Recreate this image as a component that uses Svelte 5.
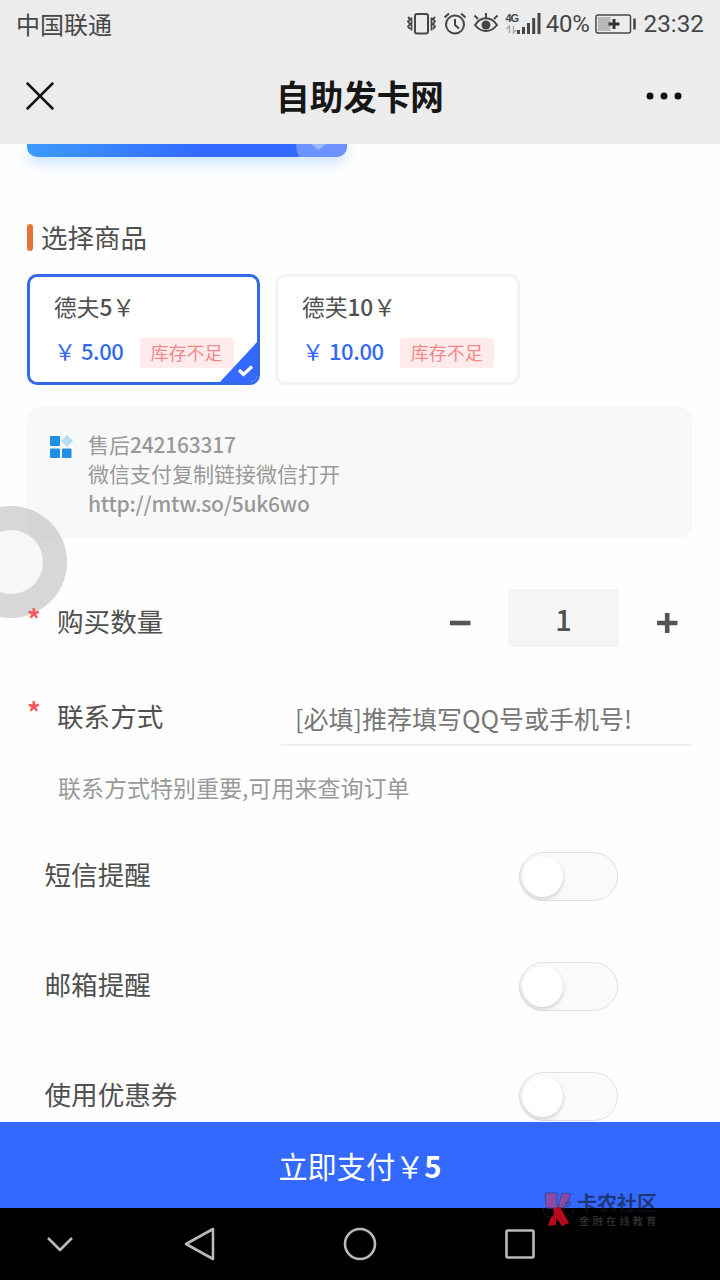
<script>
  const products = [
    { id: 1, name: '德夫', amount: '5', price: '5.00' },
    { id: 2, name: '德芙', amount: '10', price: '10.00' },
  ];

  let selected = $state(1);
  let quantity = $state(1);
  let contact = $state('');

  let options = $state([
    { label: '短信提醒', on: false },
    { label: '邮箱提醒', on: false },
    { label: '使用优惠券', on: false },
  ]);

  const total = $derived(Number(products.find((p) => p.id === selected).price) * quantity);
</script>

<div class="phone">
  <header>
    <div class="status">
      <span class="carrier">中国联通</span>
      <div class="indicators">
        <!-- vibrate, alarm, eye comfort, signal -->
        <svg width="136" height="28" viewBox="0 0 136 28" fill="none" stroke="#464646">
          <rect x="8" y="4" width="13" height="19.5" rx="2" stroke-width="2" />
          <path d="M1 7l2 2-2 2.500 2 2.500-2 2.500 2 2.500M4.500 7.500v13M28 7l-2 2 2 2.500-2 2.500 2 2.500-2 2.500M24.500 7.500v13" stroke-width="1.800" />
          <circle cx="48" cy="14.500" r="9" stroke-width="2" />
          <path d="M48 9v6l4 3.500M37.500 7.500l4.500-4M58.500 7.500l-4.500-4" stroke-width="2" />
          <path d="M68 15c6-9 16-9 22 0-6 8-16 8-22 0z" stroke-width="2" />
          <circle cx="79" cy="15" r="4.500" fill="#464646" stroke="none" />
          <path d="M79 8V3M71 9l-3.500-3.500M87 9l3.500-3.500" stroke-width="2" />
          <text x="98.500" y="12" class="net">4G</text>
          <path d="M102.500 23v-7l-3 3M106.500 16v7l3-3" stroke="#aaa" stroke-width="1.500" />
          <path d="M111.500 20v4M116.500 17v7M121.500 13v11M126.700 8v16M132 3v21" stroke-width="3" />
        </svg>
        <span class="percent">40%</span>
        <svg width="42" height="22" viewBox="0 0 42 22">
          <rect x="1" y="2" width="34.500" height="18" rx="2" fill="none" stroke="#464646" stroke-width="1.500" />
          <rect x="3" y="4" width="12.500" height="14" fill="#b7b7b7" />
          <path d="M13.500 11h11M19 6v10" stroke="#333" stroke-width="3" />
          <path d="M39.500 5.500v11" stroke="#464646" stroke-width="2.500" />
        </svg>
        <span class="time">23:32</span>
      </div>
    </div>
    <div class="titlebar">
      <svg width="28" height="28" viewBox="0 0 28 28" fill="none" stroke="#161616" stroke-width="2.500" stroke-linecap="round">
        <path d="M1.500 1.500l25 25M26.500 1.500l-25 25" />
      </svg>
      <h1>自助发卡网</h1>
      <svg width="38" height="10" viewBox="0 0 38 10" fill="#111">
        <circle cx="5" cy="5" r="3.500" /><circle cx="19" cy="5" r="3.500" /><circle cx="33" cy="5" r="3.500" />
      </svg>
    </div>
  </header>

  <main>
    <div class="category">
      <svg width="51" height="13" viewBox="0 0 51 13">
        <path d="M0 0h51v13H3Q0 7 0 0z" fill="#fff" opacity=".28" />
        <path d="M15 0h15l-8 6z" fill="#fff" opacity=".35" />
      </svg>
    </div>

    <h2><i></i>选择商品</h2>

    <div class="products">
      {#each products as p (p.id)}
        <button class="product" class:active={p.id === selected} onclick={() => (selected = p.id)}>
          <span class="name">{p.name}<b>{p.amount}</b>￥</span>
          <span class="row">
            <span class="price">￥ <b>{p.price}</b></span>
            <span class="stock">库存不足</span>
          </span>
          {#if p.id === selected}
            <svg class="tick" width="39" height="42" viewBox="0 0 39 42">
              <path d="M39 0v42H0z" fill="#3369ff" />
              <path d="M20 29l4.500 4.500 8.500-8" fill="none" stroke="#fff" stroke-width="3.200" />
            </svg>
          {/if}
        </button>
      {/each}
    </div>

    <section class="notice">
      <svg width="23" height="24" viewBox="0 0 23 24" fill="#2090e4">
        <rect x="0" y="1" width="10" height="10" rx="1" />
        <rect x="0" y="13.500" width="10" height="9.500" rx="1" />
        <rect x="12" y="13.500" width="9.500" height="9.500" rx="1" />
        <path d="M17 0l6 6-6 6-6-6z" fill="#b4dcf8" />
      </svg>
      <div>
        <p>售后<b>242163317</b></p>
        <p>微信支付复制链接微信打开</p>
        <p><b>http://mtw.so/5uk6wo</b></p>
      </div>
    </section>

    <div class="field quantity">
      <span class="star">*</span>
      <span class="label">购买数量</span>
      <div class="stepper">
        <button aria-label="减少" onclick={() => (quantity = Math.max(1, quantity - 1))}>
          <svg width="22" height="22" viewBox="0 0 22 22"><path d="M1 11h20.500" stroke="#555" stroke-width="4.600" /></svg>
        </button>
        <span class="count">{quantity}</span>
        <button aria-label="增加" onclick={() => quantity++}>
          <svg width="22" height="22" viewBox="0 0 22 22"><path d="M1 11h20.500M11.200 1v20" stroke="#555" stroke-width="4.600" /></svg>
        </button>
      </div>
    </div>

    <div class="field contact">
      <span class="star">*</span>
      <span class="label">联系方式</span>
      <input type="text" placeholder="[必填]推荐填写QQ号或手机号!" bind:value={contact} />
    </div>
    <p class="hint">联系方式特别重要,可用来查询订单</p>

    {#each options as opt}
      <div class="option">
        <span class="label">{opt.label}</span>
        <button class="switch" class:on={opt.on} aria-label={opt.label} onclick={() => (opt.on = !opt.on)}><i></i></button>
      </div>
    {/each}
  </main>

  <button class="pay">立即支付￥<b>{total}</b></button>

  <nav>
    <svg width="28" height="34" viewBox="0 0 28 34"><path d="M2 11l12 12 12-12" /></svg>
    <svg width="32" height="34" viewBox="0 0 32 34"><path d="M29 2v30L2 17z" /></svg>
    <svg width="34" height="34" viewBox="0 0 34 34"><circle cx="17" cy="17" r="15" /></svg>
    <svg width="32" height="34" viewBox="0 0 32 34"><rect x="2.500" y="3.500" width="27" height="27" rx="1" /></svg>
  </nav>

  <div class="assist"></div>

  <div class="watermark">
    <svg width="32" height="34" viewBox="0 0 32 34">
      <path d="M3 1h12v15H4z" fill="#8c4aa6" stroke="#334a9e" />
      <path d="M20 1l9 1-6 14-7-1z" fill="#8c4aa6" stroke="#334a9e" />
      <path d="M23 11l6-1-3 5z" fill="none" stroke="#27458f" />
      <path d="M11 16l7-1 9 16-7 3-6-8v7l-8 1 2-7 4-5z" fill="#b50b1c" />
      <path d="M1 16q0 9 7 9M24 24q7 0 8-8" fill="none" stroke="#171722" />
    </svg>
    <div>
      <strong>卡农社区</strong>
      <small>金融在线教育</small>
    </div>
  </div>
</div>

<style>
  :global(body) { background: #fff; }

  .phone {
    position: relative;
    display: flex;
    flex-direction: column;
    width: 720px;
    height: 1280px;
    overflow: hidden;
    background: #fefefe;
    color: #505050;
    font-family: "Noto Sans CJK SC", sans-serif;
  }
  .phone * { box-sizing: border-box; }
  h1, h2, p { margin: 0; font-weight: 400; }
  b { font-weight: 500; }
  svg { display: block; flex-shrink: 0; }
  button { padding: 0; border: 0; background: none; color: inherit; font-family: inherit; }

  /* top bars */
  header { height: 144px; flex-shrink: 0; background: #ececec; color: #464646; }
  .status { display: flex; justify-content: space-between; align-items: center; height: 48px; padding: 0 16px; }
  .carrier { font-size: 24px; line-height: 48px; }
  .indicators { display: flex; align-items: center; }
  .net { font: bold 11px "Liberation Sans", sans-serif; fill: #464646; stroke: none; letter-spacing: -1px; }
  .percent, .time { font-family: Roboto, sans-serif; font-size: 24.300px; line-height: 48px; }
  .percent { margin: 0 6px 0 3px; font-size: 24px; letter-spacing: -.3px; }
  .time { margin-left: 6px; }
  .titlebar { display: grid; grid-template-columns: 1fr auto 1fr; align-items: center; height: 96px; padding: 0 37px 0 26px; }
  .titlebar h1 { margin-left: 11px; font-size: 33.6px; font-weight: 700; line-height: 96px; color: #161616; }
  .titlebar svg:last-child { justify-self: end; }

  /* page */
  main { height: 978px; flex-shrink: 0; overflow: hidden; padding: 0 28px 0 27px; }
  .category {
    display: flex;
    justify-content: flex-end;
    width: 320px;
    height: 13px;
    overflow: hidden;
    border-radius: 0 0 10px 10px;
    background: linear-gradient(80deg, #3d9cf8, #3369ff 55%, #3369ff);
    box-shadow: 0 5px 14px rgba(64, 158, 255, .32);
  }
  h2 { display: flex; align-items: center; gap: 8px; margin-top: 60px; height: 40px; font-size: 26.5px; line-height: 40px; }
  h2 i { width: 6px; height: 27px; border-radius: 3px; background: #e67438; }

  .products { display: flex; gap: 15px; margin-top: 17px; }
  .product {
    position: relative;
    display: flex;
    flex-direction: column;
    height: 111px;
    padding: 14px 23.500px 0 24px;
    border: 3px solid #f3f3f3;
    border-radius: 10px;
    background: #fff;
    text-align: left;
    overflow: hidden;
  }
  .product.active { border-color: #3369e8; }
  .name { font-size: 22.700px; line-height: 32px; }
  .row { display: flex; align-items: center; gap: 16px; margin-top: 14px; height: 32px; }
  .price { margin-top: -7px; font-size: 22px; line-height: 30px; color: #3369ee; white-space: nowrap; }
  .price b { letter-spacing: -.4px; }
  .stock { width: 94px; height: 30px; border-radius: 3px; background: #ffebeb; color: #f08a8a; font-size: 18px; line-height: 29px; text-align: center; }
  .tick { position: absolute; right: -1px; bottom: -1px; }

  .notice { display: flex; gap: 15px; height: 132px; margin: 22px 0 0; padding: 23px; border-radius: 14px; background: #f8f8f8; color: #999; }
  .notice svg { margin-top: 5px; }
  .notice p { font-size: 21px; line-height: 29.300px; }
  .notice b { letter-spacing: -.22px; }

  .field { display: flex; align-items: center; }
  .star { position: relative; z-index: 1; width: 30px; color: #f45b5b; font-size: 27px; font-weight: 700; line-height: 40px; }
  .label { margin-top: -4px; font-size: 26.6px; line-height: 40px; }
  .quantity { height: 58px; margin-top: 50px; }
  .quantity .star { margin-top: 1px; }
  .quantity .label { margin-top: 6px; }
  .stepper { display: flex; align-items: center; margin-left: auto; padding-right: 14px; }
  .stepper button { margin-top: 9px; }
  .count { width: 111px; height: 58px; margin: 0 37px; border-radius: 4px; background: #f5f5f5; font-size: 29px; font-weight: 500; line-height: 58px; text-align: center; }

  .contact { height: 58px; margin-top: 41px; }
  .contact .star { margin-top: -10px; }
  .contact .label { margin-top: -2px; }
  .contact input {
    width: 411px;
    height: 52px;
    margin: 6px 0 0 auto;
    padding: 0 0 2px 14px;
    border: 0;
    border-bottom: 2px solid #eee;
    outline: 0;
    background: none;
    font: 25px "Noto Sans CJK SC", sans-serif;
    color: #505050;
  }
  .contact input::placeholder { color: #777; opacity: 1; }
  .hint { margin: 22px 0 2px 31px; font-size: 23px; line-height: 38px; color: #999; }

  .option { display: flex; justify-content: space-between; align-items: center; height: 50px; margin: 45px 74px 60px 17.500px; }
  .option + .option { margin-top: 0; }
  .switch { width: 99px; height: 49px; padding: 2px; border: 1.500px solid #e0e0e0; border-radius: 25px; background: #fafafa; }
  .switch i { display: block; width: 41px; height: 41px; border-radius: 50%; background: #fff; box-shadow: 0 2px 4px rgba(0, 0, 0, .18); }
  .switch.on { background: #3369ff; }
  .switch.on i { margin-left: auto; }

  /* bottom bars */
  .pay { height: 86px; flex-shrink: 0; background: #3369ff; color: #fff; font-size: 29.200px; line-height: 84px; }
  .pay b { font-weight: 700; }
  nav { display: grid; grid-template-columns: 120px 160px 160px 160px; align-items: center; justify-items: center; height: 72px; background: #000; }
  nav svg { fill: none; stroke: #b9b9b9; stroke-width: 2.600; stroke-linejoin: round; }

  .assist { position: absolute; left: -45px; top: 506px; width: 112px; height: 112px; border: 24px solid rgba(190, 190, 190, .62); border-radius: 50%; background: #f7f7f7; background-clip: padding-box; }

  .watermark { position: absolute; left: 542px; top: 1192px; display: flex; gap: 3px; }
  .watermark div { display: flex; flex-direction: column; }
  .watermark strong { height: 22px; font-size: 20px; font-weight: 700; line-height: 22px; color: rgba(20, 20, 35, .62); }
  .watermark small { margin: 1px 0 0 2px; font-size: 10.500px; letter-spacing: 2.900px; line-height: 12px; color: #3c3c3c; }
</style>
